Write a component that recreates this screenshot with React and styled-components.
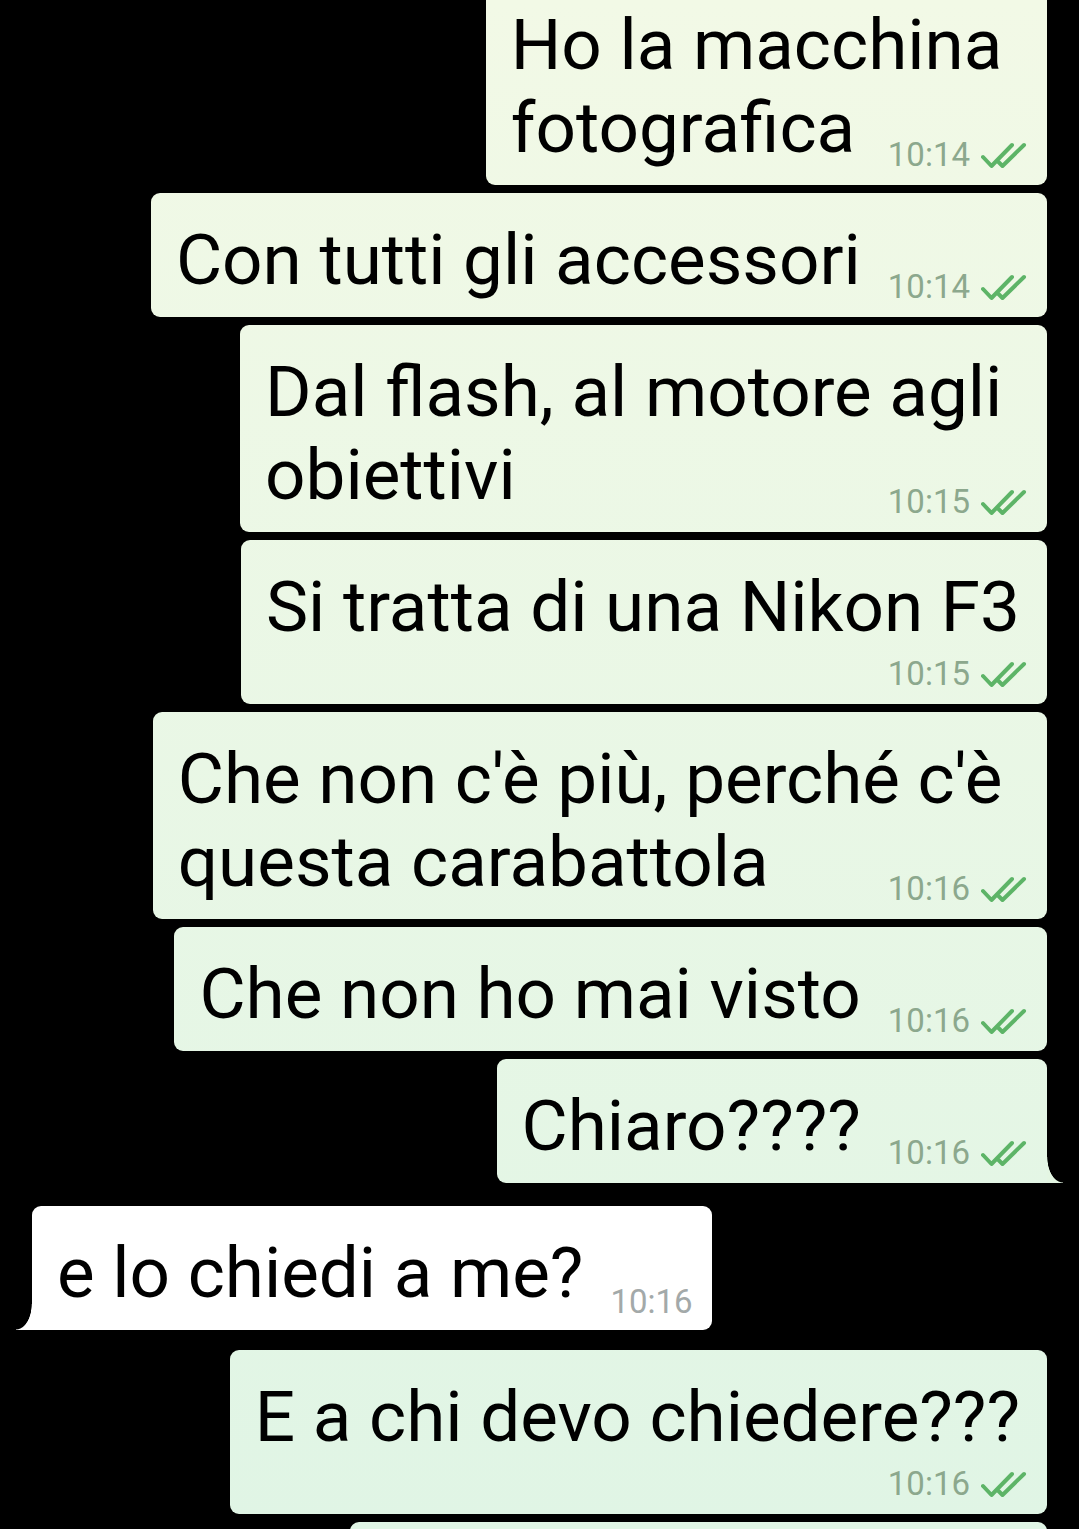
import React from 'react';
import styled, { createGlobalStyle, css } from 'styled-components';

const Global = createGlobalStyle`
  html, body {
    margin: 0;
    padding: 0;
    background: #000;
    height: 1529px;
    overflow: hidden;
  }
  body {
    font-family: Roboto, "Noto Sans", "Liberation Sans", sans-serif;
  }
`;

const Screen = styled.main`
  width: 1079px;
  height: 1529px;
  overflow: hidden;
  background: #000;
`;

const Thread = styled.div`
  display: flex;
  flex-direction: column;
  gap: 8px;
  padding: 0 32px;
  margin-top: -22px;
`;

const outTail = css`
  border-bottom-right-radius: 0;
  margin-bottom: 15px;
  &::after {
    content: '';
    position: absolute;
    bottom: 0;
    right: -16px;
    width: 16px;
    height: 26px;
    background: radial-gradient(16px 26px at 100% 0, transparent 96%, #e4f6e3 100%);
  }
`;

const inTail = css`
  border-bottom-left-radius: 0;
  margin-bottom: 12px;
  &::after {
    content: '';
    position: absolute;
    bottom: 0;
    left: -16px;
    width: 16px;
    height: 26px;
    background: radial-gradient(16px 26px at 0 0, transparent 96%, #ffffff 100%);
  }
`;

const outFill = 'linear-gradient(180deg, #f2f9e6 0%, #e0f5e5 100%) fixed';

const Bubble = styled.div`
  position: relative;
  display: flex;
  flex-direction: column;
  align-self: ${(p) => (p.$side === 'out' ? 'flex-end' : 'flex-start')};
  padding: ${(p) => (p.$side === 'out' ? '25px 20px 14px 25px' : '25px 19px 14px 25px')};
  border-radius: 9px;
  background: ${(p) => (p.$side === 'out' ? outFill : '#ffffff')};
  ${(p) => p.$tail && (p.$side === 'out' ? outTail : inTail)}
`;

/* next outgoing bubble, only its top edge scrolled into view */
const PeekBubble = styled.div`
  align-self: flex-end;
  width: ${(p) => p.$width}px;
  height: 40px;
  border-radius: 9px;
  background: ${outFill};
`;

const Line = styled.div`
  font-size: 71px;
  line-height: 83px;
  color: #000;
  white-space: pre;
  padding-right: ${(p) => (p.$pad ? '7px' : '0')};
  padding-bottom: ${(p) => (p.$last ? '2px' : '0')};
`;

const LastRow = styled.div`
  display: flex;
  align-items: flex-end;
  justify-content: space-between;
  gap: 27px;
`;

const MetaRow = styled.div`
  display: flex;
  justify-content: flex-end;
  margin-top: 8px;
`;

const Meta = styled.span`
  display: inline-flex;
  align-items: center;
  gap: 11px;
  flex-shrink: 0;
  font-size: 33px;
  line-height: 32px;
  color: ${(p) => (p.$side === 'out' ? '#8ca88d' : '#a3a9a9')};
  margin-bottom: ${(p) => (p.$side === 'out' ? '0' : '-2px')};
`;

const Ticks = styled.svg`
  display: block;
  width: 46px;
  height: 28px;
`;

function DoubleCheck() {
  return (
    <Ticks viewBox="0 0 46 28" fill="none" stroke="#5db467" strokeWidth="4" strokeLinecap="round" strokeLinejoin="round">
      <path d="M2 16 L10.5 25 L31 4" />
      <path d="M17.5 21 L21.5 25 L43 4" />
    </Ticks>
  );
}

function MetaInfo({ side, time }) {
  return (
    <Meta $side={side}>
      {time}
      {side === 'out' && <DoubleCheck />}
    </Meta>
  );
}

const messages = [
  { side: 'out', lines: ['Ho la macchina ', 'fotografica'], time: '10:14' },
  { side: 'out', lines: ['Con tutti gli accessori'], time: '10:14' },
  { side: 'out', lines: ['Dal flash, al motore agli ', 'obiettivi'], time: '10:15' },
  { side: 'out', lines: ['Si tratta di una Nikon F3'], time: '10:15', below: true },
  { side: 'out', lines: ["Che non c'è più, perché c'è ", 'questa carabattola'], time: '10:16' },
  { side: 'out', lines: ['Che non ho mai visto'], time: '10:16' },
  { side: 'out', lines: ['Chiaro????'], time: '10:16', tail: true },
  { side: 'in', lines: ['e lo chiedi a me?'], time: '10:16', tail: true },
  { side: 'out', lines: ['E a chi devo chiedere???'], time: '10:16', below: true },
];

function Message({ m }) {
  const head = m.lines.slice(0, -1);
  const last = m.lines[m.lines.length - 1];
  return (
    <Bubble $side={m.side} $tail={m.tail}>
      {head.map((l, i) => (
        <Line key={i} $pad>
          {l}
        </Line>
      ))}
      {m.below ? (
        <>
          <Line $pad $last>
            {last}
          </Line>
          <MetaRow>
            <MetaInfo side={m.side} time={m.time} />
          </MetaRow>
        </>
      ) : (
        <LastRow>
          <Line $last>{last}</Line>
          <MetaInfo side={m.side} time={m.time} />
        </LastRow>
      )}
    </Bubble>
  );
}

export default function App() {
  return (
    <Screen>
      <Global />
      <Thread>
        {messages.map((m, i) => (
          <Message key={i} m={m} />
        ))}
        <PeekBubble $width={697} />
      </Thread>
    </Screen>
  );
}
